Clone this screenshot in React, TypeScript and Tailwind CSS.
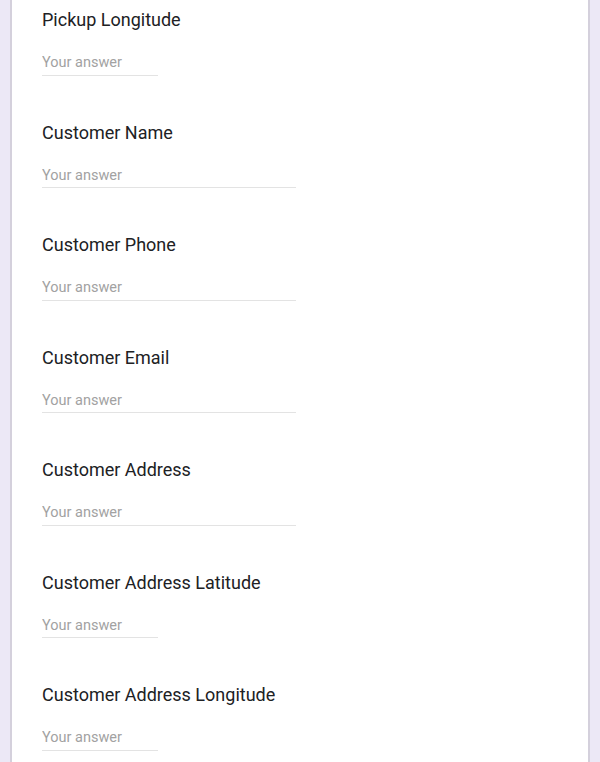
import React from "react";

interface Question {
  label: string;
  short?: boolean;
}

const questions: Question[] = [
  { label: "Pickup Longitude", short: true },
  { label: "Customer Name" },
  { label: "Customer Phone" },
  { label: "Customer Email" },
  { label: "Customer Address" },
  { label: "Customer Address Latitude", short: true },
  { label: "Customer Address Longitude", short: true },
];

function QuestionItem({ label, short }: Question) {
  return (
    <div className="h-[112.5px] pt-[9px]">
      <div className="text-[18px] leading-[22px] text-[#202124]">{label}</div>
      <div className="mt-[19px]">
        <input
          type="text"
          placeholder="Your answer"
          className={`${
            short ? "w-[116px]" : "w-[254px]"
          } h-[23px] pb-[2px] border-b border-[#e3e3e3] text-[14.5px] leading-[20px] text-[#202124] placeholder:text-[#a2a2a2] outline-none bg-transparent`}
        />
      </div>
    </div>
  );
}

export default function App() {
  return (
    <div
      className="min-h-screen bg-[#ece8f6] px-[10px] overflow-hidden"
      style={{ fontFamily: "Roboto, 'Noto Sans', Arial, sans-serif" }}
    >
      <div className="min-h-screen bg-white border-x-2 border-[#d4d0dc] pl-[30px]">
        {questions.map((q) => (
          <QuestionItem key={q.label} {...q} />
        ))}
      </div>
    </div>
  );
}
